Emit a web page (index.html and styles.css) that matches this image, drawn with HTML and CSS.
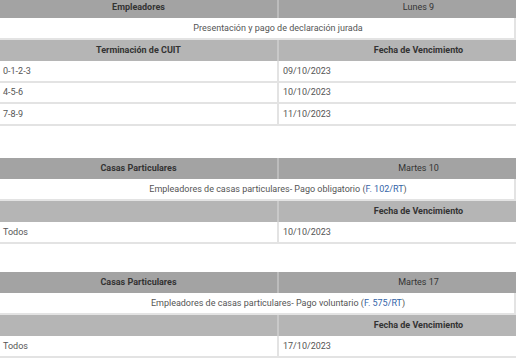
FILE: index.html
```html
<!DOCTYPE html>
<html lang="es">
<head>
<meta charset="utf-8">
<link rel="stylesheet" href="styles.css">
</head>
<body>
<div class="page">
  <section class="tabla t1">
    <div class="fila cab1"><div class="c b">Empleadores</div><div class="c">Lunes 9</div></div>
    <div class="fila desc"><div class="full">Presentación y pago de declaración jurada</div></div>
    <div class="fila cab2"><div class="c b">Terminación de CUIT</div><div class="c b">Fecha de Vencimiento</div></div>
    <div class="fila dato"><div>0-1-2-3</div><div>09/10/2023</div></div>
    <div class="fila dato"><div>4-5-6</div><div>10/10/2023</div></div>
    <div class="fila dato"><div>7-8-9</div><div>11/10/2023</div></div>
  </section>
  <section class="tabla t2">
    <div class="fila cab1"><div class="c b">Casas Particulares</div><div class="c">Martes 10</div></div>
    <div class="fila desc"><div class="full">Empleadores de casas particulares- Pago obligatorio (<a href="#">F. 102/RT</a>)</div></div>
    <div class="fila cab2"><div class="c b"></div><div class="c b">Fecha de Vencimiento</div></div>
    <div class="fila dato"><div>Todos</div><div>10/10/2023</div></div>
  </section>
  <section class="tabla t3">
    <div class="fila cab1"><div class="c b">Casas Particulares</div><div class="c">Martes 17</div></div>
    <div class="fila desc"><div class="full">Empleadores de casas particulares- Pago voluntario (<a href="#">F. 575/RT</a>)</div></div>
    <div class="fila cab2"><div class="c b"></div><div class="c b">Fecha de Vencimiento</div></div>
    <div class="fila dato"><div>Todos</div><div>17/10/2023</div></div>
  </section>
</div>
</body>
</html>
```
FILE: styles.css
```css
html, body {
  margin: 0;
  padding: 0;
  background: #fff;
}
body {
  font-family: "Roboto", "Liberation Sans", sans-serif;
  font-size: 9px;
  color: #555;
}
.page {
  margin-top: -3.5px;
}
.t1 { margin-bottom: 32px; }
.t2 { margin-bottom: 28px; }
.fila {
  display: grid;
  grid-template-columns: 279px 1fr;
  height: 21.5px;
  box-sizing: border-box;
}
.fila > div {
  display: flex;
  align-items: center;
  box-sizing: border-box;
  white-space: nowrap;
  min-width: 0;
}
.fila > div:first-child {
  border-right: 2px solid #e3e3e3;
}
.c { justify-content: center; }
.fila > .c:last-child { padding-left: 42px; }
.b { font-weight: bold; }
.cab1 { background: #a3a3a3; color: #333; }
.cab1 > div:first-child { border-right-color: #bcbcbc; }
.cab2 { background: #b5b5b5; color: #333; }
.cab2 > div:first-child { border-right-color: #c9c9c9; }
.desc {
  grid-template-columns: 1fr;
  border-bottom: 2px solid #e3e3e3;
}
.desc > .full {
  justify-content: center;
  border-right: none;
  padding-left: 42px;
}
.dato { border-bottom: 2px solid #e3e3e3; }
.dato > div:first-child { padding-left: 3px; }
.dato > div:last-child { padding-left: 4px; }
a { color: #3565a8; text-decoration: none; }
```
